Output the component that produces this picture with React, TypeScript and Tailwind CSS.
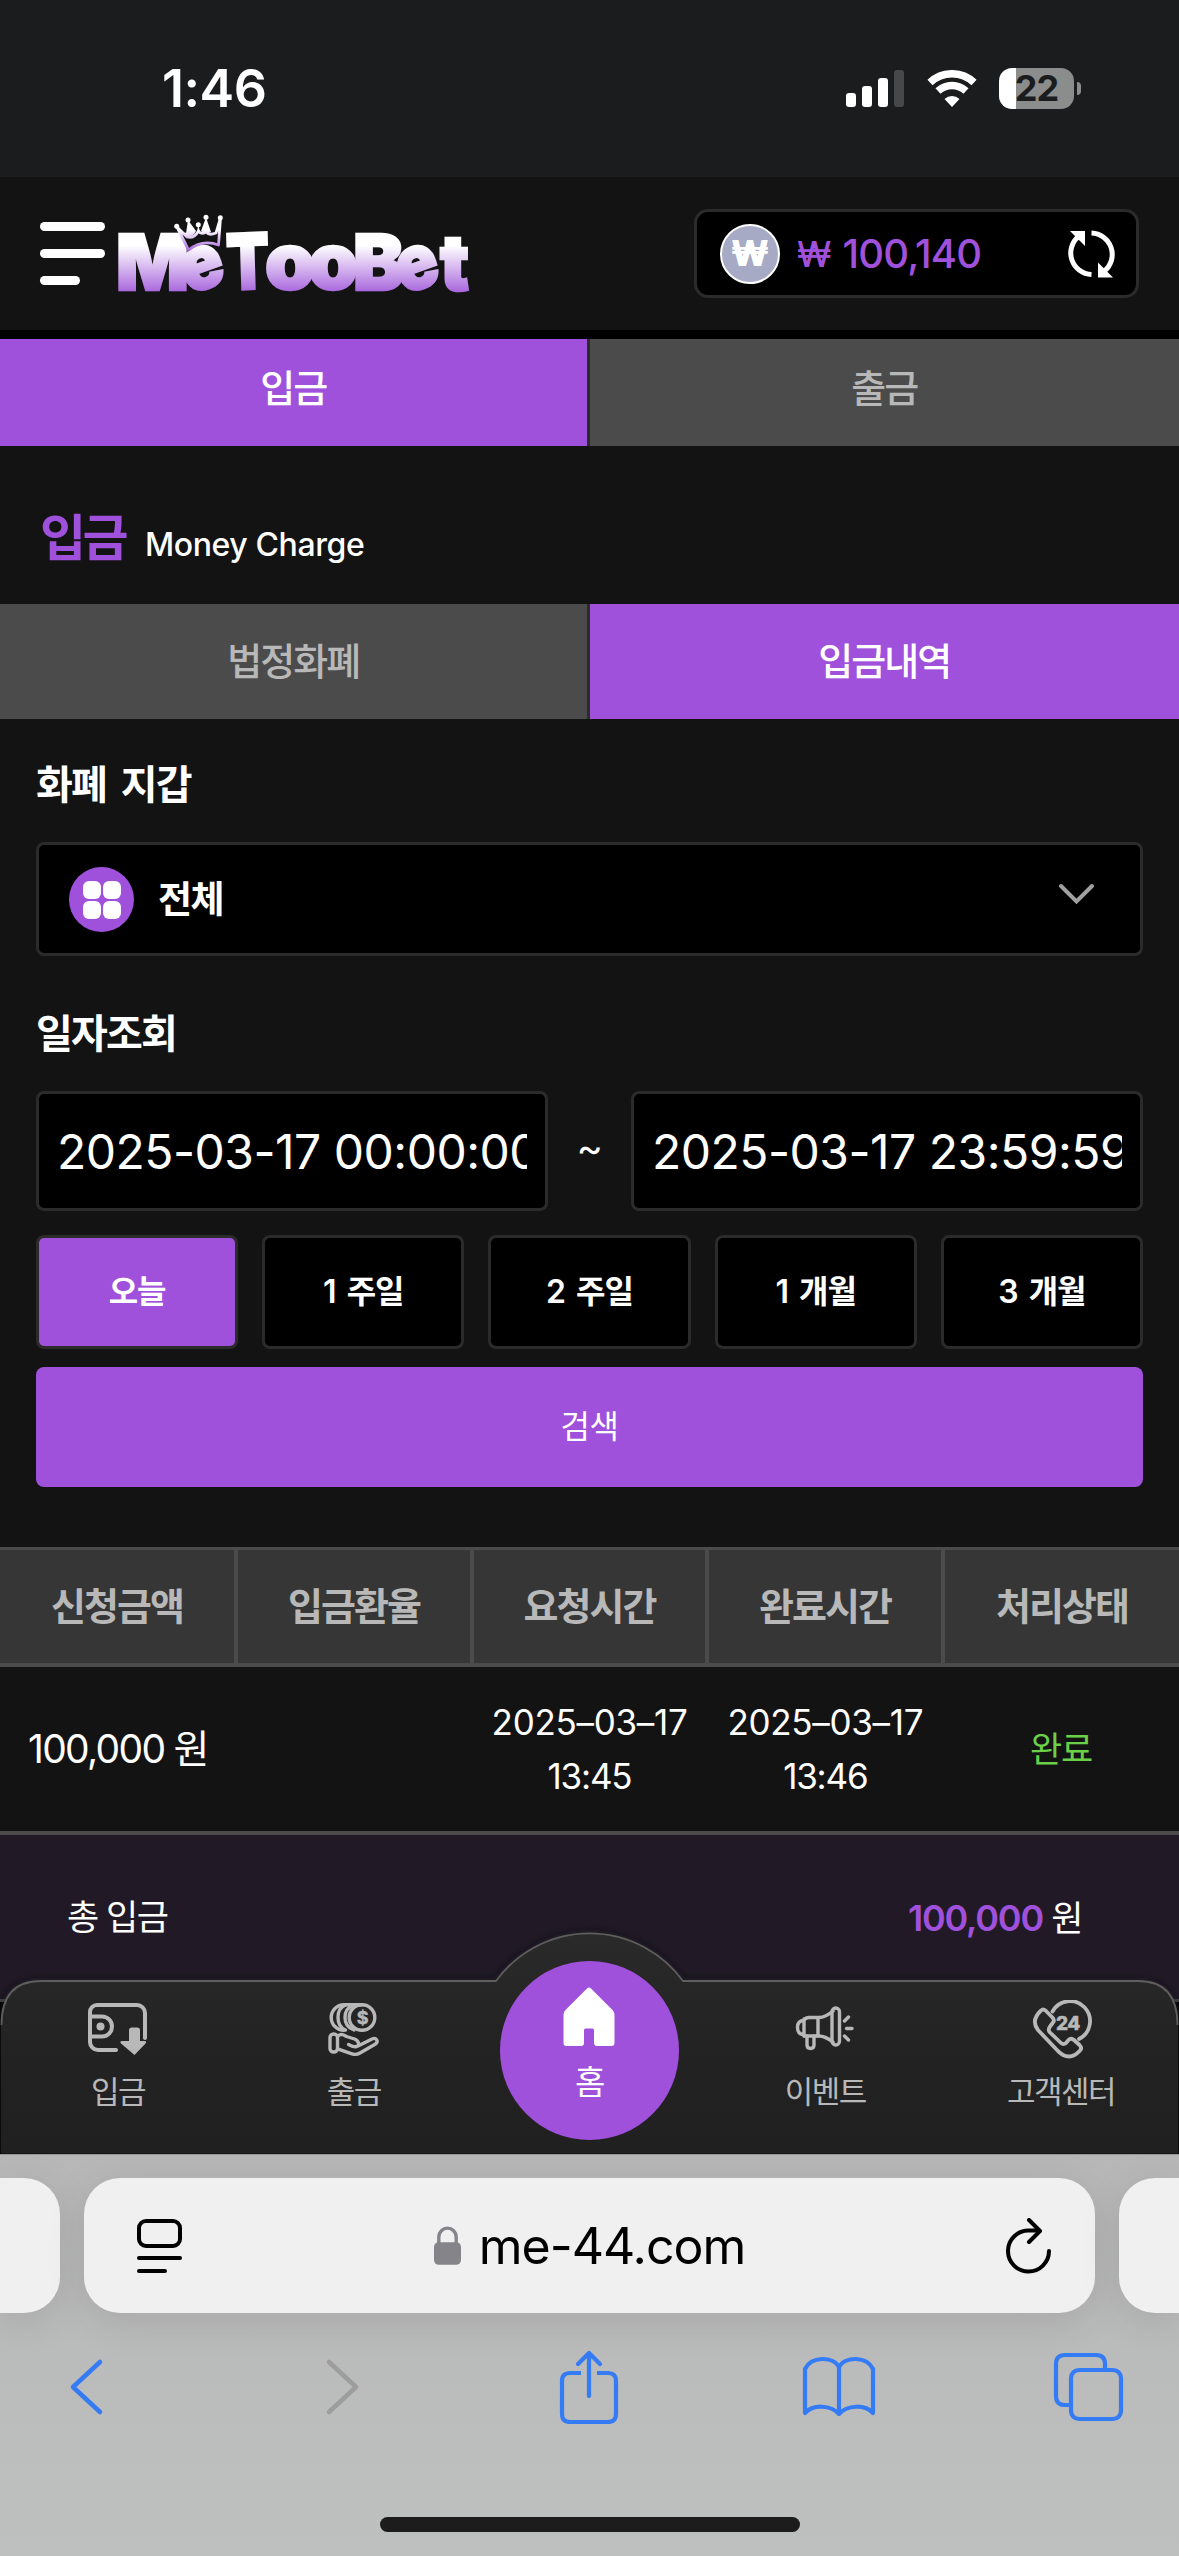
import React from "react";

function StatusBar() {
  return (
    <div className="flex h-[177px] shrink-0 items-center justify-between bg-[#1b1c1e] pr-[98px] pl-[162px] text-white">
      <span className="text-[52px] leading-none font-semibold tracking-[-0.5px]">1:46</span>
      <div className="flex items-center">
        <svg width="58" height="38" viewBox="0 0 58 38" className="fill-white">
          <rect x="0" y="23" width="10" height="14" rx="3" />
          <rect x="16" y="16" width="10" height="21" rx="3" />
          <rect x="32" y="8" width="10" height="29" rx="3" />
          <rect x="48" y="0" width="10" height="37" rx="3" className="fill-[#47484a]" />
        </svg>
        <svg width="50" height="38" viewBox="0 0 50 38" className="ml-[23px]" fill="none" stroke="#fff">
          <path d="M3 12.5a32 32 0 0 1 44 0" strokeWidth="7.5" />
          <path d="M11 21a20.5 20.5 0 0 1 28 0" strokeWidth="7.5" />
          <path d="M25 37l-7.5-8a11 11 0 0 1 15 0z" fill="#fff" stroke="none" />
        </svg>
        <div className="ml-[22px] flex h-[41px] w-[75px] items-center justify-center rounded-[13px] bg-linear-to-r from-white from-[17px] to-[#8b8c8c] to-[17px]">
          <span className="text-[36px] leading-[41px] font-bold tracking-[-1px] text-[#1b1c1e]">22</span>
        </div>
        <div className="ml-[3px] h-[13px] w-[4px] rounded-r-full bg-[#8b8c8c]" />
      </div>
    </div>
  );
}

function Logo() {
  const letters = [
    { c: "M", x: -2, y: 81, len: 73, r: 0 },
    { c: "e", x: 70, y: 86, len: 42, r: -18 },
    { c: "T", x: 109, y: 81, len: 43, r: -2 },
    { c: "o", x: 147, y: 80, len: 50, r: 0 },
    { c: "o", x: 190, y: 80, len: 50, r: 0 },
    { c: "B", x: 235, y: 81, len: 51, r: 0 },
    { c: "e", x: 285, y: 86, len: 42, r: -18 },
    { c: "t", x: 322, y: 81, len: 29, r: 0 },
  ];
  return (
    <svg width="352" height="90" viewBox="0 0 352 90" className="ml-[13px] overflow-visible">
      <defs>
        <linearGradient id="logo" gradientUnits="userSpaceOnUse" x1="0" y1="20" x2="0" y2="86">
          <stop offset="0.25" stopColor="#ffffff" />
          <stop offset="1" stopColor="#a35ddb" />
        </linearGradient>
        <linearGradient id="crown" gradientUnits="userSpaceOnUse" x1="0" y1="6" x2="0" y2="43">
          <stop offset="0.4" stopColor="#ffffff" />
          <stop offset="1" stopColor="#a35ddb" />
        </linearGradient>
      </defs>
      <g fill="url(#logo)" stroke="url(#logo)" strokeWidth="2.5" fontFamily="Inter, sans-serif" fontWeight="900" fontSize="77">
        {letters.map((l, i) => (
          <text key={i} x={l.x} y={l.y} rotate={l.r} textLength={l.len} lengthAdjust="spacingAndGlyphs">
            {l.c}
          </text>
        ))}
      </g>
      <path
        d="M59 18L70.500 41C80 33.500 90 32 100.500 36L102.500 9 98 24Q91 27 88 23Q83 26 80.500 22Q76 30 69 28z"
        fill="#131313"
        stroke="url(#crown)"
        strokeWidth="2.8"
        strokeLinejoin="round"
      />
      <g fill="url(#crown)">
        <path d="M70 11l-2.500 17q8 0 10.500-6zM88 8.500L83 22q5 4 10 1zM80.300 15.700L79 23h3z" />
        <circle cx="58.700" cy="17.300" r="2.500" />
        <circle cx="70" cy="11" r="2.500" />
        <circle cx="80.300" cy="15.700" r="2.500" />
        <circle cx="88" cy="8.300" r="2.500" />
        <circle cx="102.300" cy="8.700" r="2.500" />
      </g>
    </svg>
  );
}

function Header() {
  return (
    <header className="flex h-[162px] shrink-0 items-center justify-between border-b-[9px] border-black bg-[#131313] px-[40px]">
      <div className="flex items-center">
        <div className="flex w-[65px] flex-col gap-[18px]">
          <span className="h-[9px] rounded-full bg-white" />
          <span className="h-[9px] rounded-full bg-white" />
          <span className="h-[9px] w-[40px] rounded-full bg-white" />
        </div>
        <Logo />
      </div>
      <div className="flex h-[89px] w-[445px] items-center rounded-[14px] border-[3px] border-[#2b2b2b] bg-black pr-[20px] pl-[23px]">
        <div className="flex size-[60px] items-center justify-center rounded-full border-[2px] border-white bg-[#a6aac4] text-[35px] leading-none font-black text-white">
          ₩
        </div>
        <span className="ml-[17px] text-[35px] leading-[80px] font-medium text-[#a051dc]">₩</span>
        <span className="ml-[11px] flex-1 text-[40px] leading-[80px] font-medium tracking-[-0.8px] text-[#a051dc]">100,140</span>
        <svg width="50" height="50" viewBox="0 0 50 50" fill="none" stroke="#fff" strokeWidth="5">
          <path d="M25.5 45.5A21.5 21.5 0 0 1 12.5 7.5" />
          <path d="M25.5 4A21.5 21.5 0 0 1 38.5 42" />
          <path d="M4 2h15v15z" fill="#fff" stroke="none" />
          <path d="M47 48.5H32v-15z" fill="#fff" stroke="none" />
        </svg>
      </div>
    </header>
  );
}

function Tabs({ items, active, className }: { items: string[]; active: number; className: string }) {
  return (
    <div className={"grid shrink-0 grid-cols-2 text-[38px] leading-none font-medium tracking-[-2px] " + className}>
      {items.map((t, i) => (
        <div
          key={t}
          className={
            "flex items-center justify-center pb-[inherit] " +
            (i === 0 ? "border-r-[3px] border-[#2b2b2b] " : "") +
            (i === active ? "bg-[#a051dc] text-white" : "bg-[#4b4b4b] text-[#b8b8b8]")
          }
        >
          {t}
        </div>
      ))}
    </div>
  );
}

function Filters() {
  return (
    <div className="flex flex-col px-[36px]">
      <h2 className="mt-[41px] text-[40px] leading-[50px] font-bold tracking-[-1.8px] [word-spacing:7px]">화폐 지갑</h2>
      <div className="mt-[32px] flex h-[114px] items-center rounded-[8px] border-[3px] border-[#2b2b2b] bg-black pr-[45px] pl-[30px]">
        <div className="mt-px flex size-[65px] items-center justify-center rounded-full bg-[#a051dc]">
          <div className="grid grid-cols-2 gap-[2px]">
            {[0, 1, 2, 3].map((n) => (
              <span key={n} className="size-[18px] rounded-[6px] bg-white" />
            ))}
          </div>
        </div>
        <span className="ml-[24px] flex-1 text-[37px] leading-none font-bold tracking-[-1.5px]">전체</span>
        <svg width="37" height="22" viewBox="0 0 37 22" fill="none" stroke="#a0a0a0" strokeWidth="4" className="mb-[10px]" strokeLinecap="round">
          <path d="M3 3l15.5 15.5L34 3" />
        </svg>
      </div>
      <h2 className="mt-[53px] text-[40px] leading-[50px] font-bold tracking-[-1.8px]">일자조회</h2>
      <div className="mt-[32px] flex h-[120px] items-center justify-between text-[48px] tracking-[-0.5px]">
        <div className="flex h-full w-[512px] items-center rounded-[8px] border-[3px] border-[#2b2b2b] bg-black px-[18px] pt-[2px]">
          <span className="overflow-hidden whitespace-nowrap">2025-03-17 00:00:00</span>
        </div>
        <span className="mb-[6px] text-[40px] leading-none">~</span>
        <div className="flex h-full w-[512px] items-center rounded-[8px] border-[3px] border-[#2b2b2b] bg-black px-[18px] pt-[2px]">
          <span className="overflow-hidden whitespace-nowrap">2025-03-17 23:59:59</span>
        </div>
      </div>
      <div className="mt-[24px] grid grid-cols-5 gap-[24px] text-[32px] leading-none font-semibold tracking-[-1px] [word-spacing:4px]">
        {["오늘", "1 주일", "2 주일", "1 개월", "3 개월"].map((t, i) => (
          <div
            key={t}
            className={
              "flex h-[114px] items-center justify-center rounded-[8px] border-[3px] border-[#2b2b2b] " +
              (i === 0 ? "bg-[#a051dc]" : "bg-black")
            }
          >
            {t}
          </div>
        ))}
      </div>
      <button className="mt-[18px] h-[120px] rounded-[8px] bg-[#a051dc] text-[32px] tracking-[-0.5px]">검색</button>
    </div>
  );
}

function History() {
  return (
    <div className="mt-[60px] flex flex-col border-t-[3px] border-[#4b4b4b]">
      <div className="grid h-[117px] grid-cols-[238px_236px_235px_236px_1fr] border-b-[4px] border-[#4b4b4b] bg-[#363636] text-[38px] leading-none font-semibold tracking-[-2px] text-[#b8b8b8]">
        {["신청금액", "입금환율", "요청시간", "완료시간", "처리상태"].map((t, i) => (
          <div key={t} className={"flex items-center justify-center pb-[2px] " + (i < 4 ? "border-r-[4px] border-[#4b4b4b]" : "")}>
            {t}
          </div>
        ))}
      </div>
      <div className="grid h-[168px] grid-cols-5 items-center border-b-[4px] border-[#4b4b4b] text-center text-[35px] leading-[54px] tracking-[-1.2px]">
        <span className="text-[39px] tracking-[-1.7px]">100,000 원</span>
        <span />
        <span>
          <span className="tracking-[-0.3px]">2025–03–17</span>
          <br />
          13:45
        </span>
        <span>
          <span className="tracking-[-0.3px]">2025–03–17</span>
          <br />
          13:46
        </span>
        <span className="text-[#6bd048]">완료</span>
      </div>
      <div className="flex h-[168px] items-center justify-between border-b-[3px] border-[#4b4b4b] bg-[#211a26] pr-[97px] pl-[67px] text-[35px] tracking-[-1.5px]">
        <span>총 입금</span>
        <span>
          <b className="text-[36px] font-semibold tracking-[-1.2px] text-[#a051dc]">100,000</b> 원
        </span>
      </div>
    </div>
  );
}

const WalletIcon = () => (
  <svg width="62" height="60" viewBox="0 0 62 60" fill="none" stroke="currentColor" strokeWidth="4" strokeLinecap="round">
    <path d="M29 50H11a8 8 0 0 1-8-8V12a7 7 0 0 1 7-7h40a8 8 0 0 1 8 8v25" />
    <path d="M3 16.5h12a10 10 0 0 1 0 20H3" />
    <circle cx="13.5" cy="26.5" r="4" fill="currentColor" stroke="none" />
    <path d="M42 30q0-2.500 3-2.500h5q3 0 3 2.500v11h5q2 .5.500 2.500L47.500 55 34 43.500q-1.500-2 .500-2.500h7.500z" fill="currentColor" stroke="none" />
  </svg>
);

const CoinsIcon = () => (
  <svg width="56" height="60" viewBox="0 0 56 60" fill="none" stroke="currentColor" strokeWidth="3.4" strokeLinejoin="round" strokeLinecap="round">
    <circle cx="36" cy="17.5" r="12.800" />
    <path d="M28 5Q19 8 19 17.500T28 30M19.500 5Q12 8 12 17.500T19.500 30" />
    <path d="M36 4.700H18a12.800 12.800 0 0 0 0 25.600" />
    <text x="36" y="24" textAnchor="middle" fontSize="18" fontWeight="700" fill="currentColor" stroke="currentColor" strokeWidth="0.5">
      $
    </text>
    <rect x="4" y="34" width="7.5" height="18" rx="3.5" />
    <path d="M11.500 36c4-2.500 6-1.500 9 .5l8 2.500c4 1.500 6 6.500 2 7.500-2 .5-6-.8-8-2M32 46l14-7c4-2 7 2 3.500 5L34 53c-3 1.800-5 1.800-8 .8l-14.500-5" />
  </svg>
);

const MegaphoneIcon = () => (
  <svg width="62" height="60" viewBox="0 0 62 60" fill="none" stroke="currentColor" strokeWidth="3.4" strokeLinejoin="round" strokeLinecap="round">
    <path d="M10 20q2-2.500 5-2.500h10c6 0 10-3 14-6.500M10 36h15c6 0 10 3 14 6" />
    <path d="M10 19v17M10 20.500q-6.500 0-6.500 7t6.500 7M24 18v18" />
    <rect x="38" y="8" width="7.5" height="37" rx="3.7" />
    <path d="M13 36v9q0 3.500 3.500 3.500T20 45v-9" />
    <path d="M50.500 21l4-4M52.500 28.500h5.500M50.500 36l4 4" />
  </svg>
);

const SupportIcon = () => (
  <svg width="62" height="60" viewBox="0 0 62 60" fill="none" stroke="currentColor" strokeWidth="3.8" strokeLinejoin="round" strokeLinecap="round">
    <path d="M22.500 11.500A20 20 0 1 1 49 39" />
    <path d="M11 10.500q2-2 4.500 0l7 7q2.500 3 .500 5l-3 4q-2.500 3 0 6L31 43q2.500 2 5 0l2.500-3q2.500-2.500 5.500 0l5.500 5q3 3 .500 5.500-8 9-17 4.500Q29.500 53 27 50L8 30Q.5 20.500 11 10.500z" />
    <text x="38" y="30" textAnchor="middle" fontSize="19" fontWeight="800" fill="currentColor" stroke="currentColor" strokeWidth="0.5" letterSpacing="-0.5">
      24
    </text>
  </svg>
);

function BottomNav() {
  const items = [
    { label: "입금", icon: <WalletIcon /> },
    { label: "출금", icon: <CoinsIcon /> },
    null,
    { label: "이벤트", icon: <MegaphoneIcon /> },
    { label: "고객센터", icon: <SupportIcon /> },
  ];
  return (
    <nav className="absolute inset-x-0 bottom-0 h-[173px]">
      <svg width="1179" height="220" viewBox="0 0 1179 220" className="absolute bottom-0 left-0 overflow-visible">
        <defs>
          <linearGradient id="nav" x1="0" y1="0" x2="0" y2="1">
            <stop offset="0" stopColor="#2a2a2a" />
            <stop offset="0.5" stopColor="#232323" />
            <stop offset="1" stopColor="#202020" />
          </linearGradient>
          <filter id="glow" x="-5%" y="-20%" width="110%" height="140%">
            <feGaussianBlur stdDeviation="5" />
          </filter>
        </defs>
        <rect x="0" y="68" width="1179" height="152" fill="#000" />
        <path d="M0 46h1179v20H0z" fill="#211a26" />
        <path d="M0 65h1179v3H0z" fill="#4b4b4b" />
        <path d="M1 220V91Q1 47 41 47H496a115.500 115.500 0 0 1 187 0H1138q40 0 40 44V220z" fill="#17121b" filter="url(#glow)" />
        <path d="M1 219.500V91Q1 47 41 47H496a115.500 115.500 0 0 1 187 0H1138q40 0 40 44V219.500z" fill="url(#nav)" />
        <path d="M1.500 91Q1.500 47 41 47H496a115.500 115.500 0 0 1 187 0H1138q39.500 0 39.500 44" fill="none" stroke="#5e5e5e" strokeWidth="1.8" />
      </svg>
      <div className="relative grid h-full grid-cols-5 text-[31px] leading-[40px] tracking-[-1.5px] text-[#b8b8b8]">
        {items.map((it, i) =>
          it ? (
            <div key={i} className="flex flex-col items-center pt-[19px]">
              {it.icon}
              <span className="mt-[12px]">{it.label}</span>
            </div>
          ) : (
            <div key={i} className="-mt-[20px] flex size-[179px] flex-col items-center justify-self-center rounded-full bg-[#a051dc] pt-[26px] text-[33px] text-white">
              <svg width="52" height="59" viewBox="0 0 52 59" fill="#fff">
                <path d="M24 1.500q2-2 4 0l21.500 21.500Q51.500 25 51.500 27.500v28.500q0 3-3 3H34q-3 0-3-3V43q0-1.500-1.500-1.500h-7Q21 41.500 21 43v13q0 3-3 3H3.500q-3 0-3-3V27.500q0-2.500 2-4.500z" />
              </svg>
              <span className="mt-[16px]">홈</span>
            </div>
          ),
        )}
      </div>
    </nav>
  );
}

function Browser() {
  return (
    <div className="flex h-[402px] shrink-0 flex-col bg-gradient-to-b from-[#b7b7b7] to-[#bebfbf]">
      <div className="h-px bg-[#969696]" />
      <div className="mt-[23px] flex h-[135px] justify-between">
        <div className="w-[60px] rounded-r-[36px] bg-[#f0f0f0] shadow-[0_8px_40px_rgba(0,0,0,0.1)]" />
        <div className="flex w-[1011px] items-center justify-between rounded-[36px] bg-[#f0f0f0] pr-[43px] pl-[52px] text-black shadow-[0_8px_40px_rgba(0,0,0,0.1)]">
          <svg width="46" height="56" viewBox="0 0 46 56" fill="none" stroke="#000" strokeWidth="4" strokeLinecap="round">
            <rect x="3" y="3" width="41" height="25" rx="7" />
            <path d="M3 40h41M3 53h26" />
          </svg>
          <div className="mr-[9px] flex items-center">
            <svg width="27" height="40" viewBox="0 0 28 40" className="mr-[18px]">
              <rect x="0" y="16" width="28" height="23.500" rx="5" fill="#858489" />
              <path d="M5 18v-7.500a9 9 0 0 1 18 0V18" fill="none" stroke="#858489" strokeWidth="3.5" />
            </svg>
            <span className="text-[50px] leading-none tracking-[-1px]">me-44.com</span>
          </div>
          <svg width="46" height="56" viewBox="0 0 46 56" fill="none" stroke="#000" strokeWidth="4" strokeLinecap="round" strokeLinejoin="round">
            <path d="M43 33a20.500 20.500 0 1 1-20-20.500h10" />
            <path d="M23 2l11 11-11 11" />
          </svg>
        </div>
        <div className="w-[60px] rounded-l-[36px] bg-[#f0f0f0] shadow-[0_8px_40px_rgba(0,0,0,0.1)]" />
      </div>
      <div className="mt-[36px] flex h-[76px] items-center pl-[69px] text-[#347bf6]">
        <svg width="35" height="58" viewBox="0 0 35 58" fill="none" stroke="currentColor" strokeWidth="4.500" strokeLinecap="round" strokeLinejoin="round">
          <path d="M31 4L4 29l27 25" />
        </svg>
        <svg width="35" height="58" viewBox="0 0 35 58" fill="none" stroke="#9d9d9d" strokeWidth="4.500" strokeLinecap="round" strokeLinejoin="round" className="ml-[221px]">
          <path d="M4 4l27 25L4 54" />
        </svg>
        <svg width="60" height="74" viewBox="0 0 60 74" fill="none" stroke="currentColor" strokeWidth="4.200" strokeLinecap="round" strokeLinejoin="round" className="ml-[199px]">
          <path d="M22 23H11q-8 0-8 8v33q0 8 8 8h38q8 0 8-8V31q0-8-8-8H38" strokeLinecap="butt" />
          <path d="M30 46V3M19 14L30 3l11 11" />
        </svg>
        <svg width="74" height="64" viewBox="0 0 74 64" fill="none" stroke="currentColor" strokeWidth="4.200" strokeLinejoin="round" className="ml-[183px]">
          <path d="M37 12v47c-8-9-26-10-34-1V14C9 1 31 1 37 12zM37 12v47c8-9 26-10 34-1V14C65 1 43 1 37 12z" />
        </svg>
        <svg width="72" height="70" viewBox="0 0 72 70" fill="none" stroke="currentColor" strokeWidth="4.200" className="ml-[177px]">
          <rect x="18" y="18" width="50" height="49" rx="8" />
          <path d="M18 53h-6q-9 0-9-9V12q0-9 9-9h31q9 0 9 9v6" />
        </svg>
      </div>
      <div className="mt-[92px] h-[15px] w-[420px] self-center rounded-full bg-[#1c1c1c]" />
    </div>
  );
}

export default function App() {
  return (
    <div className="flex h-[2556px] w-[1179px] flex-col overflow-hidden bg-[#131313] font-['Inter','Noto_Sans_CJK_KR',sans-serif] text-white">
      <StatusBar />
      <Header />
      <main className="relative flex min-h-0 flex-1 flex-col overflow-hidden">
        <Tabs items={["입금", "출금"]} active={0} className="h-[107px] leading-[96px] [&>div]:pb-[10px]" />
        <div className="flex h-[158px] shrink-0 items-baseline pt-[60px] pl-[40px]">
          <h1 className="text-[50px] leading-[64px] font-bold tracking-[-3.5px] text-[#a051dc]">입금</h1>
          <span className="ml-[20px] text-[32px] font-medium tracking-[-0.4px]">Money Charge</span>
        </div>
        <Tabs items={["법정화폐", "입금내역"]} active={1} className="h-[115px] [&>div]:pb-[2px]" />
        <Filters />
        <History />
        <BottomNav />
      </main>
      <Browser />
    </div>
  );
}
